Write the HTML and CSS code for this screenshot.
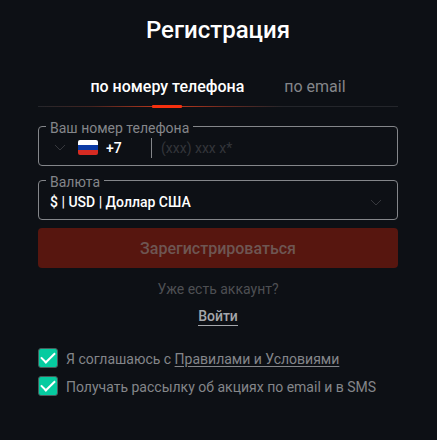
FILE: index.html
```html
<!DOCTYPE html>
<html lang="ru">
<head>
    <meta charset="UTF-8">
    <meta name="viewport" content="width=device-width, initial-scale=1.0">
    <title>Регистрация</title>
    <link rel="stylesheet" href="styles.css">
</head>
<body>

<main class="registration">
    <h1 class="title">Регистрация</h1>

    <!-- Registration method -->
    <nav class="tabs">
        <button type="button" class="tab active">по номеру телефона</button>
        <button type="button" class="tab">по email</button>
    </nav>

    <form class="form">
        <!-- Phone number -->
        <div class="field">
            <label class="field-label" for="phone">Ваш номер телефона</label>
            <button type="button" class="country">
                <svg class="chevron" viewBox="0 0 12 8" width="12" height="8"><path d="M1 1l5 5 5-5"/></svg>
                <svg class="flag" viewBox="0 0 20 15" width="20" height="15">
                    <rect width="20" height="5" fill="#ffffff"/>
                    <rect y="5" width="20" height="5" fill="#0b3ba5"/>
                    <rect y="10" width="20" height="5" fill="#d62b22"/>
                </svg>
                <span>+7</span>
            </button>
            <input type="tel" id="phone" class="phone" placeholder="(xxx) xxx x*">
        </div>

        <!-- Currency -->
        <div class="field">
            <label class="field-label" for="currency">Валюта</label>
            <select id="currency" class="currency">
                <option>$ | USD | Доллар США</option>
            </select>
            <svg class="chevron select-chevron" viewBox="0 0 12 8" width="12" height="8"><path d="M1 1l5 5 5-5"/></svg>
        </div>

        <button type="submit" class="submit" disabled>Зарегистрироваться</button>

        <!-- Login -->
        <div class="login">
            <p class="login-text">Уже есть аккаунт?</p>
            <a href="#" class="login-link">Войти</a>
        </div>

        <!-- Agreements -->
        <div class="agreements">
            <div class="check-row">
                <input type="checkbox" id="terms" class="checkbox" checked>
                <label for="terms">Я соглашаюсь с <a href="#">Правилами и Условиями</a></label>
            </div>
            <div class="check-row">
                <input type="checkbox" id="news" class="checkbox" checked>
                <label for="news">Получать рассылку об акциях по email и в SMS</label>
            </div>
        </div>
    </form>
</main>

</body>
</html>
```
FILE: styles.css
```css
* {
    box-sizing: border-box;
}
body {
    margin: 0;
    background-color: #0d1015;
    color: #84868a;
    font-family: Roboto, "Liberation Sans", sans-serif;
    font-size: 14px;
    line-height: 20px;
}
button,
input,
select {
    margin: 0;
    padding: 0;
    border: none;
    background: none;
    font: inherit;
    color: inherit;
}
.registration {
    padding: 14px 39px 40px 38px;
}
.title {
    margin: 0 0 31px;
    color: #ffffff;
    font-size: 24px;
    font-weight: 500;
    line-height: 32px;
    text-align: center;
}
/* The line under the tabs glows around the active one */
.tabs {
    display: flex;
    justify-content: center;
    align-items: flex-start;
    gap: 40px;
    margin-bottom: 18px;
    background: linear-gradient(to right, #24262b, #43231f 15%, #c93a1c 36%, #6b2a20 52%, #24262b 68%) 0 29px / 100% 1px no-repeat;
}
.tab {
    display: flex;
    flex-direction: column;
    align-items: center;
    gap: 8px;
    font-size: 16px;
    line-height: 20px;
    cursor: pointer;
}
.tab.active {
    color: #ffffff;
    font-weight: 500;
}
.tab.active::after {
    content: "";
    width: 30px;
    height: 3px;
    border-radius: 1px;
    background-color: #f5300f;
}
.form {
    display: flex;
    flex-direction: column;
}
.field {
    position: relative;
    display: flex;
    align-items: center;
    height: 40px;
    margin-bottom: 14px;
    padding-top: 3px;
    border: 1px solid #84868a;
    border-radius: 4px;
}
/* Label sits on the border of the field */
.field-label {
    position: absolute;
    top: -9px;
    left: 7px;
    padding: 0 4px;
    background-color: #0d1015;
    line-height: 20px;
}
.chevron {
    fill: none;
    stroke: #36383d;
    stroke-width: 1;
}
.country {
    display: flex;
    align-items: center;
    width: 113px;
    height: 20px;
    padding-left: 15px;
    border-right: 1px solid #84868a;
    color: #ffffff;
    font-weight: 500;
    cursor: pointer;
}
.flag {
    margin: 0 8px 0 12px;
    border-radius: 2px;
}
.phone {
    flex: 1;
    min-width: 0;
    height: 35px;
    padding: 0 9px;
    color: #ffffff;
    outline: none;
}
.phone::placeholder {
    color: #33353a;
    opacity: 1;
}
.currency {
    appearance: none;
    width: 100%;
    height: 35px;
    padding: 0 40px 0 11px;
    color: #ffffff;
    font-weight: 500;
    outline: none;
}
.select-chevron {
    position: absolute;
    top: 18px;
    right: 15px;
    pointer-events: none;
}
.submit {
    height: 40px;
    margin-top: -6px;
    padding-top: 2px;
    border-radius: 4px;
    background-color: #57160f;
    color: #6e5653;
    font-size: 16px;
    font-weight: 500;
}
.login {
    margin: 11px 0 22px;
    text-align: center;
}
.login-text {
    margin: 0 0 7px;
    color: #4d4f53;
}
.login-link {
    display: inline-block;
    border-bottom: 1px solid #a5a7ac;
    color: #a5a7ac;
    font-weight: 500;
    line-height: 18px;
    text-decoration: none;
}
.agreements {
    display: flex;
    flex-direction: column;
    gap: 7px;
}
.check-row {
    display: flex;
    align-items: flex-start;
    gap: 8px;
}
.check-row label {
    padding-top: 1px;
}
.check-row a {
    color: inherit;
    text-underline-offset: 2px;
}
.checkbox {
    appearance: none;
    display: grid;
    place-items: center;
    flex: none;
    width: 20px;
    height: 20px;
    border: 1px solid #4a5a5a;
    border-radius: 3px;
}
.checkbox:checked {
    background-color: #06cba0;
}
.checkbox:checked::before {
    content: "";
    width: 12px;
    height: 6px;
    margin-bottom: 4px;
    border: solid #ffffff;
    border-width: 0 0 2px 2px;
    transform: rotate(-45deg);
}
```
